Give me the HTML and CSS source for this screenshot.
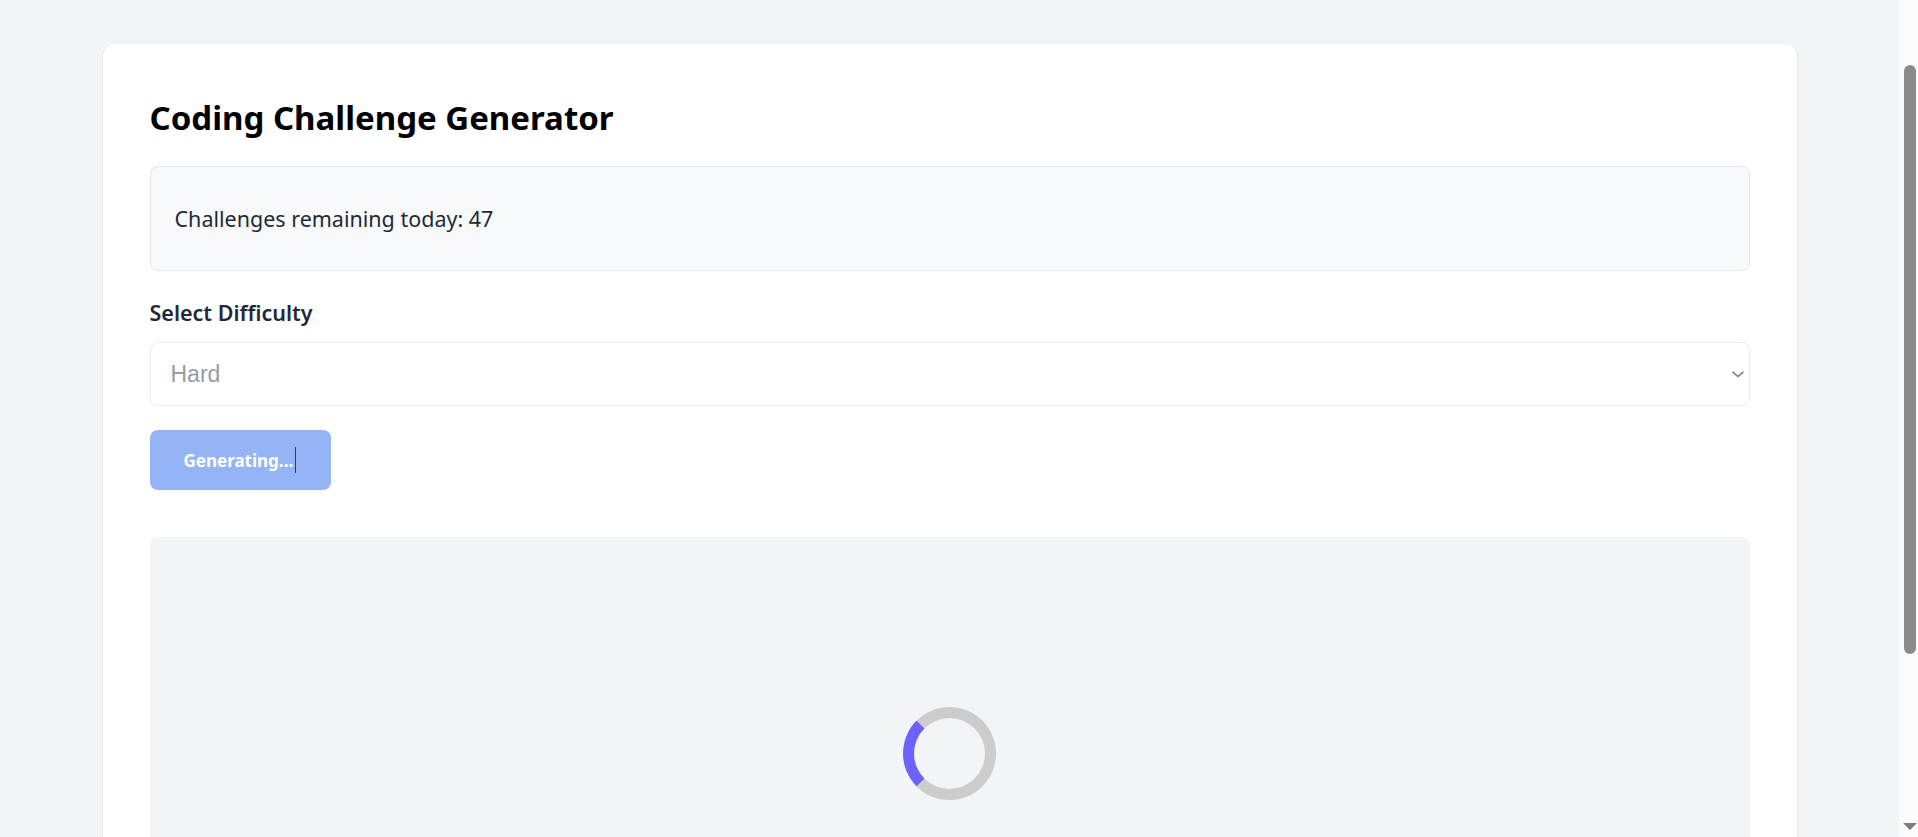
FILE: index.html
```html
<!DOCTYPE html>
<html lang="en">
<head>
<meta charset="utf-8">
<title>Coding Challenge Generator</title>
<link rel="stylesheet" href="styles.css">
</head>
<body>
  <main class="page">
    <section class="card">
      <h1 class="title">Coding Challenge Generator</h1>
      <div class="quota">
        <p class="quota-text">Challenges remaining today: 47</p>
      </div>
      <label class="label" for="difficulty">Select Difficulty</label>
      <div class="select-wrap">
        <select id="difficulty" class="select" disabled>
          <option>Easy</option>
          <option>Medium</option>
          <option selected>Hard</option>
        </select>
        <svg class="chevron" width="12" height="7" viewBox="0 0 12 7" aria-hidden="true">
          <path d="M1 1.2 L6 5.6 L11 1.2" fill="none" stroke="#80848a" stroke-width="1.6" stroke-linecap="round" stroke-linejoin="round"/>
        </svg>
      </div>
      <button class="btn" disabled><span class="btn-text">Generating...</span><span class="caret"></span></button>
      <div class="loading">
        <div class="spinner"></div>
      </div>
    </section>
  </main>
  <aside class="scrollbar" aria-hidden="true">
    <div class="thumb"></div>
    <div class="arrow-down"></div>
  </aside>
</body>
</html>
```
FILE: styles.css
```css
html, body {
  margin: 0;
  padding: 0;
  height: 100%;
  overflow: hidden;
}

body {
  display: flex;
  background: #f3f4f6;
  font-family: "Noto Sans", "Open Sans", sans-serif;
  color: #1f2937;
}

.page {
  flex: 1;
  min-width: 0;
}

.card {
  width: 1694px;
  box-sizing: border-box;
  margin: 44px auto 0;
  padding: 54px 47px 60px;
  background: #ffffff;
  border-radius: 12px;
  box-shadow: 0 1px 3px rgba(0, 0, 0, 0.06), 0 0 0 1px rgba(0, 0, 0, 0.02);
}

.title {
  margin: 0 0 28px;
  font-size: 33px;
  line-height: 40px;
  font-weight: 700;
  color: #000000;
}

.quota {
  background: #f8f9fa;
  border: 1px solid #e3e5e8;
  border-radius: 8px;
  padding: 37px 24px 36px;
}

.quota-text {
  margin: 0;
  font-size: 21.5px;
  line-height: 30px;
  color: #1f2937;
}

.label {
  display: block;
  margin-top: 27px;
  font-size: 21.5px;
  line-height: 30px;
  font-weight: 600;
  color: #1f2937;
}

.select-wrap {
  position: relative;
  margin-top: 14px;
}

.select {
  display: block;
  width: 100%;
  height: 64px;
  box-sizing: border-box;
  -webkit-appearance: none;
  appearance: none;
  background: #ffffff;
  border: 1px solid #ececec;
  border-radius: 8px;
  padding: 0 20px;
  font-family: "Liberation Sans", Arial, sans-serif;
  font-size: 23px;
  color: #979ba2;
  opacity: 1;
}

.chevron {
  position: absolute;
  right: 6px;
  top: 29px;
}

.btn {
  display: flex;
  align-items: center;
  margin-top: 24px;
  width: 181px;
  height: 60px;
  padding: 0 0 0 34px;
  box-sizing: border-box;
  border: none;
  border-radius: 8px;
  background: #94b4f5;
  color: #ffffff;
  font-family: "Noto Sans", "Open Sans", sans-serif;
  font-size: 17px;
  font-weight: 700;
}

.caret {
  display: inline-block;
  width: 0;
  height: 26px;
  margin-left: 2px;
  border-left: 1px solid #3a3a3a;
}

.loading {
  margin-top: 47px;
  background: #f3f4f6;
  border-radius: 8px;
  padding: 170px 0 200px;
  display: flex;
  justify-content: center;
}

.spinner {
  width: 93px;
  height: 93px;
  box-sizing: border-box;
  border: 11px solid #cccccc;
  border-left-color: #6c63ff;
  border-radius: 50%;
}

.scrollbar {
  width: 19px;
  flex: none;
  height: 100vh;
  background: #fbfbfb;
  display: flex;
  flex-direction: column;
}

.thumb {
  margin: 65px 2px 0 5px;
  height: 589px;
  background: #8b8b8b;
  border-radius: 6px;
}

.arrow-down {
  margin: auto 0 7px 4px;
  width: 0;
  height: 0;
  border-left: 7px solid transparent;
  border-right: 7px solid transparent;
  border-top: 7px solid #7d7d7d;
}
```
